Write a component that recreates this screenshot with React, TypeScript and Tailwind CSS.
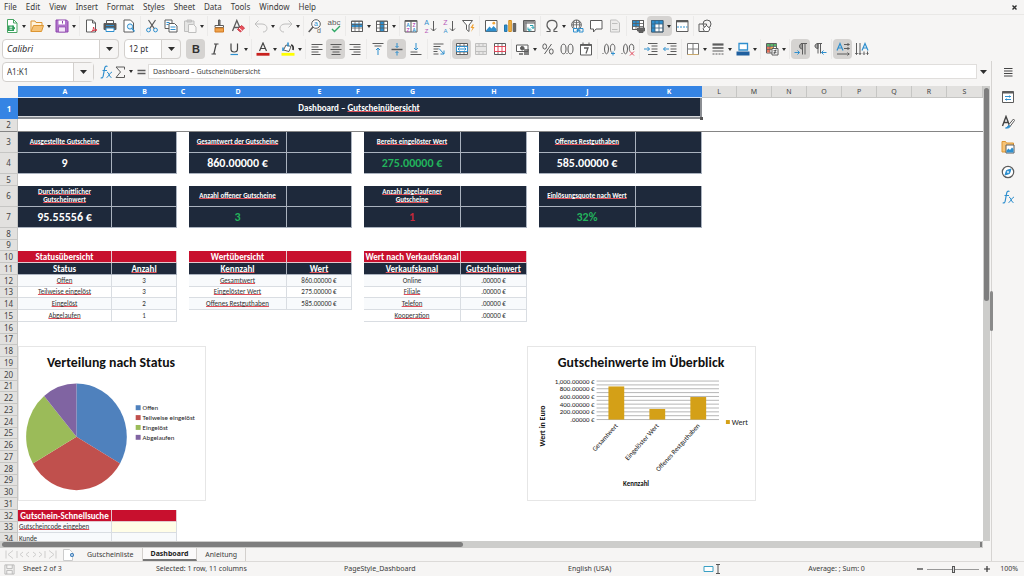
import { useState } from "react";
import type { ReactNode } from "react";

const INK = "#5c5c5c";
const BLUE = "#2f8fce";
const GLYPH_FONT = "Liberation Sans, sans-serif";

function Icon({ children, dim = false }: { children: ReactNode; dim?: boolean }) {
  return (
    <svg width="14" height="14" viewBox="0 0 14 14" fill="none" stroke={INK} strokeWidth="1" opacity={dim ? 0.35 : 1} aria-hidden="true">
      {children}
    </svg>
  );
}

function Glyph({ x, y, size, fill = INK, bold = false, children }: { x: number; y: number; size: number; fill?: string; bold?: boolean; children: string }) {
  return (
    <text x={x} y={y} fontSize={size} fill={fill} stroke="none" fontFamily={GLYPH_FONT} fontWeight={bold ? 700 : 400} textAnchor="middle">
      {children}
    </text>
  );
}

const grid = "M1.5 2.5h11v10h-11zM1.5 5.5h11M1.5 9h11M5 2.5v10M9 2.5v10";

const icons: Record<string, ReactNode> = {
  new: (
    <Icon>
      <path d="M2.5.5h6l3.500 3.500v9.500h-9.500z" fill="#fff" stroke="#4aa564" />
      <path d="M8.500.5v3.500h3.500" stroke="#4aa564" />
      <path d="M3 6.500h6v5.500h-6z" fill="#2f9e5b" stroke="none" />
      <path d="M4.500 8.200h3M4.500 10.200h3" stroke="#fff" />
      <path d="M7.500 7l2.500 2.200-2.500 2.200" fill="#2f9e5b" stroke="#2f9e5b" />
    </Icon>
  ),
  open: (
    <Icon>
      <path d="M1 12.500v-10.500h4l1 1.500h6v3" fill="#fff3dc" stroke="#dd9633" />
      <path d="M1 12.500l2.500-6h10l-2 6z" fill="#f6c377" stroke="#dd9633" />
    </Icon>
  ),
  save: (
    <Icon>
      <path d="M1 1h10.500l1.500 1.500v10.500h-12z" fill="#b074cb" stroke="#8e44ad" />
      <path d="M3.500 1.500h6.500v4h-6.500z" fill="#fff" stroke="none" />
      <path d="M3.500 8h7v5h-7z" fill="#f3e6f8" stroke="#8e44ad" strokeWidth=".7" />
      <path d="M7.500 2v2.500" stroke="#8e44ad" />
    </Icon>
  ),
  pdf: (
    <Icon>
      <path d="M2.500 1h6l3 3v9h-9z" fill="#fff" />
      <path d="M8.500 1v3h3" />
      <path d="M7.500 12.500c1.500-1 2-2.500 2-4.500.5 2.500 1.500 3 3.500 3-2 0-4 .5-5.500 1.500z" stroke="#dc3545" />
    </Icon>
  ),
  print: (
    <Icon>
      <path d="M3.500 4.500v-3h7v3" fill="#fff" />
      <path d="M1 4.500h12v6h-12z" fill="#585858" />
      <path d="M3 9h8v3.500h-8z" fill="#fff" stroke={BLUE} />
      <path d="M3 6.500h8" stroke={BLUE} />
    </Icon>
  ),
  preview: (
    <Icon>
      <path d="M2 1h6.500l3 3v9h-9.500z" fill="#fff" />
      <circle cx="8" cy="7.500" r="2.600" stroke={BLUE} fill="#e7f4fc" />
      <path d="M10 9.500l2.500 3" stroke={BLUE} strokeWidth="1.300" />
    </Icon>
  ),
  cut: (
    <Icon>
      <path d="M3.500 1l5.800 8.600M10.500 1l-5.800 8.600" strokeWidth="1.200" />
      <circle cx="3.500" cy="11" r="1.900" stroke={BLUE} />
      <circle cx="10.500" cy="11" r="1.900" stroke={BLUE} />
    </Icon>
  ),
  copy: (
    <Icon>
      <path d="M1 1h7v8.500h-7z" fill="#fff" />
      <path d="M2.500 3.500h3M2.500 5.500h2" stroke={BLUE} />
      <path d="M5 4.500h5.500l2.500 2.500v6h-8z" fill="#fff" />
      <path d="M6.500 8h5M6.500 10.500h5" stroke={BLUE} />
    </Icon>
  ),
  paste: (
    <Icon dim>
      <path d="M1.500 2h9.500v10.500h-9.500z" fill="#c8c8c8" />
      <path d="M4 1h4.500v2h-4.500z" fill="#888" />
      <path d="M5.500 5.500h5l2.500 2.500v5.500h-7.500z" fill="#fff" />
    </Icon>
  ),
  clone: (
    <Icon>
      <path d="M6.500 1h1.500v5h-1.500z" fill="#8a8a8a" />
      <path d="M3 6.500h8.500v2h-8.500z" fill="#fff" />
      <path d="M3 9h8.500v4h-8.500z" fill="#f0a24a" stroke="#d17b22" />
    </Icon>
  ),
  clear: (
    <Icon>
      <path d="M1.500 12l4.300-10.500 3 7M3 8.500h5" strokeWidth="1.300" />
      <path d="M6.500 10.500l4-4 3 2.500-4 4z" fill="#e8505b" stroke="#cc3944" />
      <path d="M8 9l3 2.700" stroke="#fff" />
    </Icon>
  ),
  undo: (
    <Icon dim>
      <path d="M4.500 1.500l-3.500 3.500 3.500 3.500M1 5h7c3 0 5 2 5 4.200s-1.500 3.800-4 3.800" />
    </Icon>
  ),
  redo: (
    <Icon dim>
      <path d="M9.500 1.500l3.500 3.500-3.500 3.500M13 5h-7c-3 0-5 2-5 4.200s1.500 3.800 4 3.800" />
    </Icon>
  ),
  find: (
    <Icon>
      <circle cx="8" cy="5" r="4.300" fill="#fff" />
      <path d="M5 8l-4.300 5" strokeWidth="1.500" />
      <Glyph x={8} y={7} size={7} fill={BLUE}>a</Glyph>
      <Glyph x={11} y={13.500} size={7}>d</Glyph>
    </Icon>
  ),
  spell: (
    <Icon>
      <Glyph x={7} y={6} size={8}>abc</Glyph>
      <path d="M5 10l2.500 2.500 5.500-5.500" stroke="#2fa866" strokeWidth="1.400" />
    </Icon>
  ),
  row: (
    <Icon>
      <path d="M1.500 2h11v10.500h-11z" fill="#fff" />
      <path d="M1 4.500h12v3.500h-12z" fill={BLUE} stroke="none" />
      <path d={grid} strokeWidth=".8" />
    </Icon>
  ),
  column: (
    <Icon>
      <path d="M1.500 2h11v10.500h-11z" fill="#fff" />
      <path d="M5 2h4v10.500h-4z" fill={BLUE} stroke="none" />
      <path d={grid} strokeWidth=".8" />
    </Icon>
  ),
  sort: (
    <Icon>
      <path d="M1 1.500h12v11.500h-12zM7 1.500v11.500" fill="#fff" />
      <path d="M1 2h12" strokeWidth="1.700" />
      <Glyph x={4} y={7.500} size={5} fill={BLUE} bold>A</Glyph>
      <Glyph x={4} y={12.500} size={5} fill="#b558b8" bold>Z</Glyph>
      <Glyph x={10} y={7.500} size={5} fill="#b558b8" bold>Z</Glyph>
      <Glyph x={10} y={12.500} size={5} fill={BLUE} bold>A</Glyph>
    </Icon>
  ),
  asc: (
    <Icon>
      <Glyph x={3.500} y={6} size={7} fill={BLUE}>A</Glyph>
      <Glyph x={3.500} y={13.500} size={6} fill="#b558b8">Z</Glyph>
      <path d="M10.500 2v10M8 9.500l2.500 2.500 2.500-2.500" />
    </Icon>
  ),
  desc: (
    <Icon>
      <Glyph x={3.500} y={6} size={7} fill="#b558b8">Z</Glyph>
      <Glyph x={3.500} y={13.500} size={6} fill={BLUE}>A</Glyph>
      <path d="M10.500 2v10M8 9.500l2.500 2.500 2.500-2.500" />
    </Icon>
  ),
  filter: (
    <Icon>
      <path d="M1.500 1.500h10l-3.500 4.500v6.500l-2.500-2v-4.500z" fill="#fff" />
      <path d="M11.500 5.500l-2 3.500h2l-1.500 4 3.500-5h-2l1.500-2.500z" fill="#f0a030" stroke="none" />
    </Icon>
  ),
  image: (
    <Icon>
      <path d="M1.500 1.500h11.500v11h-11.500z" fill="#fff" />
      <path d="M2 11.500l3.500-4 2 2 2-2.500 3 3v2.500h-10.500z" fill={BLUE} stroke="none" />
      <circle cx="9.800" cy="4.200" r="1.400" fill="#f3a73b" stroke="none" />
    </Icon>
  ),
  chart: (
    <Icon>
      <path d="M1.500 6h2.500v6.500h-2.500z" fill={BLUE} stroke="#2576ab" />
      <path d="M5.800 1.500h2.500v11h-2.500z" fill="#f3b64b" stroke="#d48d1b" />
      <path d="M10.200 4.500h2.500v8h-2.500z" fill="#6a6a6a" />
    </Icon>
  ),
  pivot: (
    <Icon>
      <path d="M1.500 1.500h11.500v11h-11.500zM1.500 4h11.500M4 1.500v11" fill="#fff" />
      <path d="M2 2.700h10.500M2.700 3v9" strokeWidth="1.600" stroke="#8a8a8a" />
      <path d="M6 8.500v2.500h3.500M8 9.500l-1.500 1.500 1.500 1.300M8 6.500h3v3M9.500 8l1.500 1.500 1.300-1.500" stroke="#25a0ae" />
    </Icon>
  ),
  omega: (
    <Icon>
      <path d="M1.500 12.500h3.500v-1.800c-2-1-3-2.700-3-4.700 0-2.800 2-4.700 5-4.700s5 1.900 5 4.700c0 2-1 3.700-3 4.700v1.800h3.500" strokeWidth="1.200" />
    </Icon>
  ),
  link: (
    <Icon>
      <circle cx="6.500" cy="5.800" r="4.800" fill="#fff" />
      <path d="M1.700 5.800h9.600M6.500 1v9.600M3 2.800c2 1.300 5 1.300 7 0M4.500 1.500c-1.500 2.500-1.500 6 0 8.500M8.500 1.500c1.500 2.500 1.500 6 0 8.500" strokeWidth=".8" />
      <path d="M3.500 9.500h4v3.500h-4zM9 9.500h4v3.500h-4zM6.500 11.300h4" fill="#f6f5f4" stroke={BLUE} />
    </Icon>
  ),
  comment: (
    <Icon>
      <path d="M1.500 1.500h11.500v8.500h-6l-2.500 3v-3h-3z" fill="#fff" />
    </Icon>
  ),
  headfoot: (
    <Icon dim>
      <path d="M2.500 1h6l3 3v9h-9z" fill="#ddd" />
      <path d="M4 4.500h5.500M4 10.500h5.500" />
    </Icon>
  ),
  printarea: (
    <Icon>
      <path d="M1.500 1.500h11v9h-11z" fill="#fff" />
      <path d="M1.500 1.500h7v6h-7z" fill={BLUE} stroke="none" />
      <path d="M1.500 1.500h11v9h-11zM1.500 4.500h11M1.500 7.500h11M5 1.500v9M8.500 1.500v9" strokeWidth=".8" />
      <path d="M6.500 9h7v3h-7zM8 11.500h4v2h-4z" fill="#666" />
    </Icon>
  ),
  freeze: (
    <Icon>
      <path d="M1.500 1.500h11.500v11.500h-11.500z" fill="#fff" />
      <path d="M1.500 1.500h11.500v3.500h-8v8h-3.500z" fill={BLUE} stroke="none" />
      <path d="M1.500 1.500h11.500v11.500h-11.500zM1.500 5h11.500M1.500 9h11.500M5 1.500v11.500M9 1.500v11.500" strokeWidth=".8" stroke="#37607d" />
    </Icon>
  ),
  split: (
    <Icon>
      <path d="M1.500 1.500h11.500v11h-11.500z" fill="#fff" />
      <path d="M1.500 2.300h11.500" strokeWidth="2" />
      <path d="M2 8h10.500" stroke={BLUE} strokeDasharray="2 1" />
    </Icon>
  ),
  shapes: (
    <Icon>
      <path d="M1 5h7.500v7.500h-7.500z" />
      <circle cx="9" cy="5" r="4" />
      <path d="M5 9.500l3.500-3 3.500 3-1.500 3h-4z" fill="#fff" />
    </Icon>
  ),
  bold: <Icon><Glyph x={7} y={11} size={11} fill="#303030" bold>B</Glyph></Icon>,
  italic: (
    <Icon>
      <path d="M6 2h4.500M3.500 12h4.500M8.200 2l-2.400 10" strokeWidth="1.200" stroke="#444" />
    </Icon>
  ),
  underline: (
    <Icon>
      <path d="M4 1.500v5.500c0 4 6.500 4 6.500 0v-5.500" stroke="#444" strokeWidth="1.200" />
      <path d="M3.500 12.500h7.500" stroke={BLUE} strokeWidth="1.200" />
    </Icon>
  ),
  fontcolor: (
    <Icon>
      <path d="M3.500 9l3.500-8 3.500 8M4.700 6.500h4.600" strokeWidth="1.200" stroke="#444" />
      <path d="M.5 12.300h13" stroke="#c9211e" strokeWidth="2.800" />
    </Icon>
  ),
  highlight: (
    <Icon>
      <path d="M5 3l5 1.500-2 5-5.500-1.500z" fill="#fff" />
      <path d="M2 5.500v3.500M7 .5v4" stroke={BLUE} strokeWidth="1.600" />
      <path d="M10 3c2 0 2.500 2.500 2 5" stroke="#333" strokeWidth="1.700" />
      <path d="M.5 12.300h13" stroke="#ffff00" strokeWidth="2.800" />
    </Icon>
  ),
  left: <Icon><path d="M1.500 2.500h11M1.500 5h7M1.500 7.500h11M1.500 10h7M1.500 12.500h9" /></Icon>,
  center: <Icon><path d="M1.500 2.500h11M3.500 5h7M1.500 7.500h11M3.500 10h7M2.500 12.500h9" /></Icon>,
  right: <Icon><path d="M1.500 2.500h11M5.500 5h7M1.500 7.500h11M5.500 10h7M3.500 12.500h9" /></Icon>,
  top: (
    <Icon>
      <path d="M1.500 1.500h11M3.500 4h7" />
      <path d="M7 13v-7M5 8l2-2 2 2" stroke={BLUE} />
    </Icon>
  ),
  middle: (
    <Icon>
      <path d="M1.500 7.500h11" strokeWidth="1.400" />
      <path d="M7 1v4.500M5.500 4l1.500 1.500 1.500-1.500M7 13.500v-4M5.500 11l1.500-1.500 1.500 1.500" stroke={BLUE} />
    </Icon>
  ),
  bottom: (
    <Icon>
      <path d="M1.500 12.500h11M1.500 10h7" />
      <path d="M7 1v7M5 6l2 2 2-2" stroke={BLUE} />
    </Icon>
  ),
  wrap: (
    <Icon>
      <path d="M1.500 2h10M1.500 4.500h7M1.500 7h5M1.500 9.500h4M1.500 12h5" />
      <path d="M7 6.500l5 5.500M12 8.500v3.500h-3.500" stroke={BLUE} />
    </Icon>
  ),
  merge: (
    <Icon>
      <path d="M1.500 1.500h11v11h-11z" fill="#fff" />
      <path d="M1.500 4h11M1.500 10h11M5 1.500v2.500M9 1.500v2.500M5 10v2.500M9 10v2.500" strokeWidth=".8" />
      <path d="M1.500 4.500h11v5h-11zM3 7h8M4.500 5.500l-1.500 1.500 1.500 1.500M9.500 5.500l1.500 1.500-1.500 1.500" stroke={BLUE} />
    </Icon>
  ),
  mergecells: (
    <Icon dim>
      <path d="M1.500 1.500h11v11h-11z" fill="#ccc" />
      <path d="M1.500 4.500h11M1.500 9.500h11M5 1.500v3M9 1.500v3M5 9.500v3M9 9.500v3" />
    </Icon>
  ),
  unmerge: (
    <Icon>
      <path d="M1.500 1.500h11v11h-11z" fill="#fff" />
      <path d="M1.500 4.500h11M5 1.500v3M9 1.500v3M5 9.500v3M9 9.500v3" strokeWidth=".8" />
      <path d="M1.500 4.500h11v5h-11zM5 4.500v5M9 4.500v5" stroke="#e0475a" />
    </Icon>
  ),
  currency: (
    <Icon>
      <path d="M.5 3h11.500v6.500h-11.500z" fill="#fff" />
      <circle cx="6.300" cy="6.200" r="1.800" fill={INK} />
      <path d="M8 8h5M8 10h5M8 12h5M3 12h4" strokeWidth="1.400" />
    </Icon>
  ),
  percent: (
    <Icon>
      <ellipse cx="3.700" cy="4.500" rx="1.900" ry="2.600" />
      <ellipse cx="10.300" cy="9.500" rx="1.900" ry="2.600" />
      <path d="M10.500 2l-7 10" />
    </Icon>
  ),
  number: (
    <Icon>
      <ellipse cx="3.500" cy="7" rx="2.500" ry="4.800" />
      <ellipse cx="10.500" cy="7" rx="2.500" ry="4.800" />
      <path d="M6.500 11.500h1" />
    </Icon>
  ),
  date: (
    <Icon>
      <path d="M1.500 2.500h11v10.500h-11z" fill="#fff" />
      <path d="M1.500 3h11" strokeWidth="1.800" />
      <path d="M4 .5v2M10 .5v2" />
      <path d="M5 6h4l-2 5.500" strokeWidth="1.300" />
    </Icon>
  ),
  adddec: (
    <Icon>
      <path d="M.5 11.500h1" />
      <ellipse cx="4.500" cy="7" rx="2" ry="4.800" />
      <path d="M9.500 10.500c-1.600-2-1.600-8.300 1-8.300s2.600 4 2 6.300" />
      <path d="M11 9.500v4M9 11.500h4" stroke={BLUE} />
    </Icon>
  ),
  deldec: (
    <Icon>
      <path d="M.5 11.500h1" />
      <ellipse cx="4.500" cy="7" rx="2" ry="4.800" />
      <path d="M9 9.500c-1.200-2.300-1-7.300 1.500-7.300s2.600 4 2 5.800" />
      <path d="M9 9.500l4 4M13 9.500l-4 4" stroke="#e0475a" />
    </Icon>
  ),
  indent: (
    <Icon>
      <path d="M4 1.500h9.500M7.500 4h6M7.500 7h6M7.500 9.500h6M4 12.500h9.500" />
      <path d="M0 7h5.500M3.500 5l2 2-2 2" stroke={BLUE} />
    </Icon>
  ),
  outdent: (
    <Icon>
      <path d="M4 1.500h9.500M7.500 4h6M7.500 7h6M7.500 9.500h6M4 12.500h9.500" />
      <path d="M6 7h-5.500M2.500 5l-2 2 2 2" stroke={BLUE} />
    </Icon>
  ),
  borders: (
    <Icon>
      <path d="M1.500 1.500h11v11h-11zM7 1.500v11M1.500 7h11" fill="#fff" stroke="#777" />
      <path d="M1.500 12.500h11" stroke="#c9a86b" />
    </Icon>
  ),
  linestyle: (
    <Icon>
      <path d="M1.500 2.500h11" strokeWidth="2.200" />
      <path d="M1.500 6h11" strokeWidth="1.600" />
      <path d="M1.500 9h11" />
      <path d="M1.500 12h11" strokeDasharray="2 1" />
    </Icon>
  ),
  bordercolor: (
    <Icon>
      <path d="M3 1.500h8.500v6.500h-8.500z" fill="#fff" stroke={BLUE} strokeWidth="1.300" />
      <path d="M.5 11.500h13" stroke="#1f5f9f" strokeWidth="4" />
    </Icon>
  ),
  conditional: (
    <Icon>
      <path d="M1.500 1.500h10v9.500h-10z" fill="#fff" />
      <path d="M2 2h9.500v2.500h-9.500z" fill="#58b46b" stroke="none" />
      <path d="M2 5h3v5.500h-3z" fill="#e8735c" stroke="none" />
      <path d="M5 5h3.500v2.500h-3.500z" fill="#f0a24a" stroke="none" />
      <path d="M1.500 4.500h10M1.500 7.500h10M5 1.500v9.500M8.500 1.500v9.500" strokeWidth=".7" />
      <path d="M7 6.500h6v6.500h-6zM8.500 8.700h3M8.500 10.700h3M9 12l2-4.500" fill="#fff" />
    </Icon>
  ),
  ltr: (
    <Icon>
      <path d="M8.500 12.500v-11M11 12.500v-11M13 1.500h-6" />
      <path d="M8.500 1.500c-4 0-4 5.500 0 5.500z" fill={INK} fillOpacity=".5" />
      <path d="M.5 10.500h5M3.500 8.500l2 2-2 2" stroke={BLUE} />
    </Icon>
  ),
  rtl: (
    <Icon>
      <path d="M5 11.500v-10M7.500 11.500v-10M9 1.500h-5" />
      <path d="M5 1.500c-4 0-4 5 0 5z" fill={INK} fillOpacity=".5" />
      <path d="M13.500 10.500h-5M10.500 8.500l-2 2 2 2" stroke={BLUE} />
    </Icon>
  ),
  horiz: (
    <Icon>
      <path d="M1 8.500l3-7 3 7M2 6h4" stroke={BLUE} strokeWidth="1.200" />
      <path d="M8 2.500h5.500M8 6.500h5.500M1 12h12.500M11.500 1l1.500 1.500-1.500 1.500M11.500 5l1.500 1.500-1.500 1.500M11.500 10.500l1.500 1.500-1.500 1.500" />
    </Icon>
  ),
  vert: (
    <Icon>
      <path d="M7 8.500l3-7 3 7M8 6h4" stroke={BLUE} strokeWidth="1.200" />
      <path d="M1.500 1v11.500M5 1v11.500M.3 11l1.200 1.500 1.200-1.500M3.800 11l1.200 1.500 1.200-1.500M9 9.500v3M12.500 9.500v3M8 11.500l1 1 1-1M11.500 11.500l1 1 1-1" />
    </Icon>
  ),
  burger: <Icon><path d="M3 3.500h8.500M3 6h8.500M3 8.500h8.500M3 11h8.500" stroke="#444" strokeWidth="1.200" /></Icon>,
  props: (
    <Icon>
      <path d="M1.500 1.500h11v11h-11z" fill="#fff" />
      <path d="M1.500 2.500h11" strokeWidth="2" />
      <path d="M4 6.500h6M4 9.500h6M8.500 5.500v2M5.500 8.500v2" stroke={BLUE} />
    </Icon>
  ),
  styles: (
    <Icon>
      <path d="M1.500 11l3.500-9.500 3.500 9M2.700 7.500h5" strokeWidth="1.400" stroke="#444" />
      <path d="M12.500 4l-5 6 1.500 1.500 4.500-6z" fill="#fff" />
      <path d="M4.500 13c2.500 0 1.500-2.500 3.500-2.500 2 1 .5 3-3.500 2.500z" fill={BLUE} stroke={BLUE} />
    </Icon>
  ),
  gallery: (
    <Icon>
      <path d="M1 12v-10.500h3.500l1 1.500h7v9z" fill="#f6c377" stroke="#dd9633" />
      <path d="M5 5h8v8h-8z" fill="#fff" />
      <path d="M5.500 12.500v-2l2-2 1.500 1.500 2-2.500 1.500 1.500v3.500z" fill={BLUE} stroke="none" />
    </Icon>
  ),
  navigator: (
    <Icon>
      <circle cx="7" cy="7" r="5.700" fill="#fff" strokeWidth="1.200" />
      <path d="M10 4l-1.500 4.500-4.500 1.500 1.500-4.500z" fill={BLUE} stroke={BLUE} />
      <circle cx="7" cy="7" r=".9" fill="#fff" stroke="none" />
    </Icon>
  ),
  fx: (
    <Icon>
      <path d="M8.500 1.500c-2-1-2.700.5-3 2.500l-1.300 7c-.3 1.800-1.200 2.300-2.500 1.700M3.500 5.500h4.500" stroke={BLUE} strokeWidth="1.200" />
      <path d="M8 7c2 0 2 5.500 4.500 5.500M13 7c-2 0-3.500 5.500-5.500 5.500" stroke={BLUE} />
    </Icon>
  ),
  sum: <Icon><path d="M11.500 4.500v-2.500h-8.500l4.500 5-4.500 5.500h8.500v-2.500" /></Icon>,
  equals: <Icon><path d="M3.500 5.500h8M3.500 8.500h8" strokeWidth="1.400" /></Icon>,
};

function Caret({ big = false }: { big?: boolean }) {
  return (
    <svg width={big ? 7 : 4} height={big ? 4 : 3} viewBox="0 0 8 5" preserveAspectRatio="none" fill="#2e2e2e" aria-hidden="true">
      <path d="M0 0h8l-4 5z" />
    </svg>
  );
}

type Tool = { id: string; label: string; menu?: boolean; active?: boolean } | "|";

const standardTools: Tool[] = [
  { id: "new", label: "New", menu: true }, { id: "open", label: "Open", menu: true }, { id: "save", label: "Save", menu: true }, "|",
  { id: "pdf", label: "Export as PDF" }, { id: "print", label: "Print" }, { id: "preview", label: "Print Preview" }, "|",
  { id: "cut", label: "Cut" }, { id: "copy", label: "Copy" }, { id: "paste", label: "Paste", menu: true }, "|",
  { id: "clone", label: "Clone Formatting" }, { id: "clear", label: "Clear Formatting" }, "|",
  { id: "undo", label: "Undo", menu: true }, { id: "redo", label: "Redo", menu: true }, "|",
  { id: "find", label: "Find and Replace" }, { id: "spell", label: "Spelling" }, "|",
  { id: "row", label: "Row", menu: true }, { id: "column", label: "Column", menu: true }, "|",
  { id: "sort", label: "Sort" }, { id: "asc", label: "Sort Ascending" }, { id: "desc", label: "Sort Descending" }, { id: "filter", label: "AutoFilter" }, "|",
  { id: "image", label: "Insert Image" }, { id: "chart", label: "Insert Chart" }, { id: "pivot", label: "Insert Pivot Table" }, "|",
  { id: "omega", label: "Special Character", menu: true }, { id: "link", label: "Hyperlink" }, { id: "comment", label: "Comment" }, { id: "headfoot", label: "Headers and Footers" }, "|",
  { id: "printarea", label: "Define Print Area" }, { id: "freeze", label: "Freeze Rows and Columns", menu: true, active: true }, { id: "split", label: "Split Window" }, "|",
  { id: "shapes", label: "Draw Functions" },
];

const formatTools: Tool[] = [
  { id: "bold", label: "Bold", active: true }, { id: "italic", label: "Italic" }, { id: "underline", label: "Underline", menu: true }, "|",
  { id: "fontcolor", label: "Font Color", menu: true }, { id: "highlight", label: "Background Color", menu: true }, "|",
  { id: "left", label: "Align Left" }, { id: "center", label: "Center", active: true }, { id: "right", label: "Align Right" }, "|",
  { id: "top", label: "Align Top" }, { id: "middle", label: "Center Vertically", active: true }, { id: "bottom", label: "Align Bottom" }, "|",
  { id: "wrap", label: "Wrap Text" }, "|",
  { id: "merge", label: "Merge and Center", active: true }, { id: "mergecells", label: "Merge Cells" }, { id: "unmerge", label: "Unmerge Cells" }, "|",
  { id: "currency", label: "Currency", menu: true }, { id: "percent", label: "Percent" }, { id: "number", label: "Number" }, { id: "date", label: "Date" }, "|",
  { id: "adddec", label: "Add Decimal Place" }, { id: "deldec", label: "Delete Decimal Place" }, "|",
  { id: "indent", label: "Increase Indent" }, { id: "outdent", label: "Decrease Indent" }, "|",
  { id: "borders", label: "Borders", menu: true }, { id: "linestyle", label: "Border Style", menu: true }, { id: "bordercolor", label: "Border Color", menu: true }, "|",
  { id: "conditional", label: "Conditional Formatting", menu: true }, "|",
  { id: "ltr", label: "Left-To-Right", active: true }, { id: "rtl", label: "Right-To-Left" }, "|",
  { id: "horiz", label: "Text direction horizontal", active: true }, { id: "vert", label: "Text direction vertical" },
];

function Toolbar({ tools }: { tools: Tool[] }) {
  return (
    <>
      {tools.map((t, i) =>
        t === "|" ? (
          <span key={i} className="flex h-5 w-1 shrink-0 justify-center"><span className="w-px bg-[#ebeae9]" /></span>
        ) : (
          <span key={i} className={`flex h-5 shrink-0 rounded-sm ${t.active ? "bg-[#d5d3d1]" : ""}`}>
            <button aria-label={t.label} aria-pressed={t.active} className="flex w-[19px] items-center justify-center">{icons[t.id]}</button>
            {t.menu && <button aria-label={`${t.label} options`} className="flex w-[6px] items-center justify-center"><Caret /></button>}
          </span>
        )
      )}
    </>
  );
}

type Cell = { t?: ReactNode; k: string; v?: string };

const kinds: Record<string, string> = {
  kpi: "bg-[#1e293b] text-white font-bold text-[7px] leading-[8px] border-r border-b border-[#aab2be]",
  num: "bg-[#1e293b] font-bold text-xs leading-4 border-r border-b border-[#aab2be]",
  red: "bg-[#c8102e] text-white font-bold text-[9px] leading-[11px] border-r border-b border-[#e3c9cf]",
  head: "bg-[#1e293b] text-white font-bold text-[9px] leading-[10px] border-r border-b border-[#aab2be]",
  odd: "bg-[#f8fafc] text-[#333] text-[7px] leading-[10px] border-r border-b border-[#d9dde2]",
  even: "bg-white text-[#333] text-[7px] leading-[10px] border-r border-b border-[#d9dde2]",
  label: "bg-[#f8fafc] text-[#333] text-[7px] leading-[10px] text-left indent-px border-r border-b border-[#d9dde2]",
  input: "bg-[#fffde7] border-r border-b border-[#d9dde2]",
};

function Sp({ children }: { children: ReactNode }) {
  return <span className="underline decoration-[#e04f59] decoration-1 underline-offset-0 [text-decoration-skip-ink:none]">{children}</span>;
}

const blank = { k: "" };
const sp = (s: string) => <Sp>{s}</Sp>;
const kpiRow = (texts: ReactNode[]): Cell[] => texts.flatMap((t) => [{ t, k: "kpi" }, { k: "kpi" }, blank]).slice(0, 11);
const numRow = (vals: [string, string][]): Cell[] => vals.flatMap(([t, c]) => [{ t, k: "num", v: c }, { k: "num" }, blank]).slice(0, 11);

const GREEN = "text-[#22b45c]";
const bodyRow = (k: string, parts: (ReactNode[] | null)[]): Cell[] =>
  parts.flatMap((p) => (p ? [{ t: p[0], k }, { t: p[1], k }, blank] : [blank, blank, blank]));

const rows: Record<number, Cell[]> = {
  3: kpiRow([sp("Ausgestellte Gutscheine"), sp("Gesamtwert der Gutscheine"), sp("Bereits eingelöster Wert"), sp("Offenes Restguthaben")]),
  4: numRow([["9", "text-white"], ["860.00000 €", "text-white"], ["275.00000 €", GREEN], ["585.00000 €", "text-white"]]),
  6: kpiRow([
    <>{sp("Durchschnittlicher")}<br />{sp("Gutscheinwert")}</>,
    sp("Anzahl offener Gutscheine"),
    <>{sp("Anzahl abgelaufener")}<br />{sp("Gutscheine")}</>,
    sp("Einlösungsquote nach Wert"),
  ]),
  7: numRow([["95.55556 €", "text-white"], ["3", GREEN], ["1", "text-[#c5283a]"], ["32%", GREEN]]),
  10: bodyRow("red", [["Statusübersicht", ""], ["Wertübersicht", ""], ["Wert nach Verkaufskanal", ""]]),
  11: bodyRow("head", [["Status", sp("Anzahl")], [sp("Kennzahl"), sp("Wert")], [sp("Verkaufskanal"), sp("Gutscheinwert")]]),
  12: bodyRow("odd", [[sp("Offen"), "3"], [sp("Gesamtwert"), "860.00000 €"], ["Online", ".00000 €"]]),
  13: bodyRow("even", [[sp("Teilweise eingelöst"), "3"], [sp("Eingelöster Wert"), "275.00000 €"], [sp("Filiale"), ".00000 €"]]),
  14: bodyRow("odd", [[sp("Eingelöst"), "2"], [sp("Offenes Restguthaben"), "585.00000 €"], [sp("Telefon"), ".00000 €"]]),
  15: bodyRow("even", [[sp("Abgelaufen"), "1"], null, [sp("Kooperation"), ".00000 €"]]),
  32: [{ t: "Gutschein-Schnellsuche", k: "red" }, { k: "red" }],
  33: [{ t: sp("Gutscheincode eingeben"), k: "label" }, { k: "input" }],
  34: [{ t: "Kunde", k: "label" }, { k: "label" }],
};

function rowHeight(n: number) {
  if (n === 3 || n === 4 || n === 6 || n === 7) return "h-[21px]";
  if (n === 9 || (n > 9 && n % 4 === 1)) return "h-[11px]";
  return "h-3";
}

const letters = "ABCDEFGHIJKLMNOPQRS".split("");

function SheetTable() {
  return (
    <table className="w-full table-fixed border-separate border-spacing-0 text-center font-[Carlito,Lato,sans-serif] whitespace-nowrap [&_td]:overflow-hidden [&_td]:p-0 [&_th]:p-0">
      <colgroup>
        <col className="w-[18px]" />
        <col className="w-[94px]" /><col className="w-[65px]" /><col className="w-3" />
        <col className="w-[98px]" /><col className="w-[65px]" /><col className="w-3" />
        <col className="w-[97px]" /><col className="w-[66px]" /><col className="w-3" />
        <col className="w-[97px]" /><col className="w-[66px]" />
        <col className="w-[35px]" /><col className="w-[35px]" /><col className="w-[35px]" /><col className="w-[35px]" />
        <col className="w-[35px]" /><col className="w-[35px]" /><col className="w-[35px]" /><col />
      </colgroup>
      <thead className="font-[Noto_Sans,sans-serif] text-[7px] leading-[10px]">
        <tr>
          <td className="h-3 bg-[#f6f5f4]" />
          {letters.map((l, i) => (
            <th key={l} scope="col" className={i < 11 ? "border-b border-[#d5e3f5] bg-[#3584e4] font-bold text-white" : "border-r border-b border-[#c6c6c4] bg-[#e2e1df] font-normal text-[#444]"}>{l}</th>
          ))}
        </tr>
      </thead>
      <tbody>
        <tr>
          <th scope="row" className="h-[21px] bg-[#3584e4] font-[Noto_Sans,sans-serif] text-[8px] leading-[10px] font-bold text-white">1</th>
          <td colSpan={11} className="border-r-2 border-b-2 border-[#8b8e93] bg-[#1e293b] text-[9px] leading-4 font-bold text-white shadow-[inset_0_-1px_0_#d8dadd]">
            Dashboard – <Sp>Gutscheinübersicht</Sp>
          </td>
          <td colSpan={8} />
        </tr>
        <tr>
          <th scope="row" className="h-[13px] border-r border-b border-r-[#c6c6c4] border-b-[#858585] bg-[#e2e1df] font-[Noto_Sans,sans-serif] text-[8px] leading-[10px] font-normal text-[#444]">2</th>
          <td colSpan={19} className="border-b border-[#858585]" />
        </tr>
        {Array.from({ length: 32 }, (_, i) => i + 3).map((n) => {
          const cells = rows[n] ?? [];
          return (
            <tr key={n}>
              <th scope="row" className={`${rowHeight(n)} border-r border-b border-[#c6c6c4] bg-[#e2e1df] font-[Noto_Sans,sans-serif] text-[8px] leading-[10px] font-normal text-[#444]`}>{n}</th>
              {cells.map((c, i) => (
                <td key={i} className={`${kinds[c.k] ?? ""} ${c.v ?? ""}`}>{c.t}</td>
              ))}
              <td colSpan={19 - cells.length} />
            </tr>
          );
        })}
      </tbody>
    </table>
  );
}

const slices = [
  { name: "Offen", n: 3, color: "#4f81bd" },
  { name: "Teilweise eingelöst", n: 3, color: "#c0504d" },
  { name: "Eingelöst", n: 2, color: "#9bbb59" },
  { name: "Abgelaufen", n: 1, color: "#8064a2" },
];

function PieChart() {
  let acc = 0;
  const pt = (a: number) => `${58 + 51 * Math.sin(a)} ${91 - 54 * Math.cos(a)}`;
  return (
    <svg width="188" height="155" viewBox="0 0 188 155" className="absolute top-[260px] left-[18px] border border-[#e6e6e6] bg-white font-[Carlito,Lato,sans-serif]" role="img" aria-label="Verteilung nach Status">
      <text x="93" y="20" fontSize="14" fontWeight="700" textAnchor="middle" fill="#111">Verteilung nach Status</text>
      {slices.map((s) => {
        const a0 = (acc / 9) * 2 * Math.PI;
        acc += s.n;
        const a1 = (acc / 9) * 2 * Math.PI;
        return <path key={s.name} d={`M58 91L${pt(a0)}A51 54 0 0 1 ${pt(a1)}Z`} fill={s.color} />;
      })}
      {slices.map((s, i) => (
        <g key={s.name}>
          <rect x="118" y={59 + i * 10} width="5" height="5" fill={s.color} />
          <text x="125" y={64 + i * 10} fontSize="7" fill="#222">{s.name}</text>
        </g>
      ))}
    </svg>
  );
}

const bars = [
  { name: "Gesamtwert", v: 860 },
  { name: "Eingelöster Wert", v: 275 },
  { name: "Offenes Restguthaben", v: 585 },
];

function BarChart() {
  return (
    <svg width="229" height="155" viewBox="0 0 229 155" className="absolute top-[260px] left-[527px] border border-[#e6e6e6] bg-white font-[Carlito,Lato,sans-serif]" role="img" aria-label="Gutscheinwerte im Überblick">
      <text x="114" y="20" fontSize="14" fontWeight="700" textAnchor="middle" fill="#111">Gutscheinwerte im Überblick</text>
      {Array.from({ length: 11 }, (_, i) => (
        <path key={i} d={`M69 ${73.500 - i * 3.900}h124`} stroke="#b5b5b5" strokeWidth="1" />
      ))}
      {["1,000.00000 €", "800.00000 €", "600.00000 €", "400.00000 €", "200.00000 €", ".00000 €"].map((t, i) => (
        <text key={t} x="67" y={37 + i * 7.800} fontSize="7" textAnchor="end" fill="#222">{t}</text>
      ))}
      {bars.map((b, i) => (
        <g key={b.name}>
          <rect x={81 + i * 41.500} y={73.500 - b.v * 0.039} width="16" height={b.v * 0.039} fill="#d4a017" />
          <text transform={`translate(${91 + i * 41.500} 80) rotate(-48)`} fontSize="7" textAnchor="end" fill="#222">{b.name}</text>
        </g>
      ))}
      <text transform="translate(17 80) rotate(-90)" fontSize="8" fontWeight="700" textAnchor="middle" fill="#111">Wert in Euro</text>
      <text x="109" y="141" fontSize="7" fontWeight="700" textAnchor="middle" fill="#111">Kennzahl</text>
      <rect x="200" y="74" width="4" height="4" fill="#d4a017" />
      <text x="206" y="79" fontSize="8" fill="#222">Wert</text>
    </svg>
  );
}

function Combo({ label, value, className, textClass }: { label: string; value: string; className: string; textClass: string }) {
  return (
    <div className={`relative h-5 shrink-0 ${className}`}>
      <select aria-label={label} defaultValue={value} className={`h-full w-full appearance-none rounded-sm border border-[#d3d0cd] bg-white pl-1 text-[#2e2e2e] ${textClass}`}>
        <option>{value}</option>
      </select>
      <span className="pointer-events-none absolute inset-y-0 right-0 flex w-5 items-center justify-center rounded-r-sm border border-[#d3d0cd] bg-[#f6f5f4]"><Caret big /></span>
    </div>
  );
}

const menus = ["File", "Edit", "View", "Insert", "Format", "Styles", "Sheet", "Data", "Tools", "Window", "Help"];

export default function App() {
  const [tab, setTab] = useState("Dashboard");
  const [name, setName] = useState("A1:K1");
  const [formula, setFormula] = useState("Dashboard – Gutscheinübersicht");
  return (
    <div className="flex h-screen flex-col overflow-hidden bg-[#f6f5f4] font-[Noto_Sans,sans-serif] text-[8px] leading-3 text-[#3a3a3a]">
      <header className="flex h-[15px] shrink-0 items-center justify-between border-b border-[#e9e8e6] pr-[5px] pl-1">
        <nav aria-label="Menu" className="flex gap-[9px]">
          {menus.map((m) => <button key={m}>{m}</button>)}
        </nav>
        <button aria-label="Close document" className="p-0.5">
          <svg width="5" height="5" viewBox="0 0 5 5" stroke="#2e2e2e" strokeWidth="1.400" aria-hidden="true"><path d="M.5.5l4 4M4.500.5l-4 4" /></svg>
        </button>
      </header>
      <div role="toolbar" aria-label="Standard" className="flex h-[22px] shrink-0 items-center pl-0.5"><Toolbar tools={standardTools} /></div>
      <div role="toolbar" aria-label="Formatting" className="flex h-6 shrink-0 items-center pl-0.5">
        <Combo label="Font name" value="Calibri" className="mr-[5px] w-[117px]" textClass="text-[9px] italic" />
        <Combo label="Font size" value="12 pt" className="mr-[5px] w-[57px]" textClass="text-[8px]" />
        <Toolbar tools={formatTools} />
      </div>

      <div className="flex min-h-0 flex-1">
        <main className="flex min-w-0 flex-1 flex-col">
          <div className="flex h-[25px] shrink-0 items-center pr-0.5 pb-1 pl-0.5">
            <div className="mr-[5px] flex h-5 w-[92px] rounded-sm border border-[#d3d0cd] bg-white">
              <input aria-label="Name box" value={name} onChange={(e) => setName(e.target.value)} className="min-w-0 flex-1 bg-transparent pl-1 text-[8px] outline-none" />
              <button aria-label="Name box list" className="flex w-5 items-center justify-center border-l border-[#d3d0cd] bg-[#f6f5f4]"><Caret big /></button>
            </div>
            <button aria-label="Function Wizard">{icons.fx}</button>
            <button aria-label="Select Function">{icons.sum}</button>
            <button aria-label="Function options" className="flex w-[7px] justify-center"><Caret /></button>
            <button aria-label="Formula">{icons.equals}</button>
            <input aria-label="Formula input" value={formula} onChange={(e) => setFormula(e.target.value)} className="h-[15px] min-w-0 flex-1 border border-[#e0dedc] bg-white pl-1 text-[7px] text-[#444] outline-none" />
            <button aria-label="Expand formula bar" className="flex w-3 items-center justify-center"><Caret big /></button>
          </div>
          <div className="flex min-h-0 flex-1">
            <div className="relative min-w-0 flex-1 overflow-hidden bg-white">
              <SheetTable />
              <span className="absolute top-[31px] left-[700px] size-[3px] bg-[#555]" />
              <PieChart />
              <BarChart />
            </div>
            <div className="mr-px w-[7px] shrink-0 bg-[#cdcdcb] px-px pt-0.5"><div className="h-[47%] rounded-full bg-[#7e7e7e]" /></div>
          </div>
          <div className="mr-2 flex h-[7px] shrink-0 items-center justify-between bg-[#cdcdcb] pr-px pl-0.5"><div className="h-[5px] w-[47%] rounded-full bg-[#7e7e7e]" /><div className="h-[5px] w-0.5 bg-[#7e7e7e]" /></div>
          <div className="flex h-[13px] shrink-0 items-stretch">
            <div className="flex w-[63px] items-center pl-[5px] opacity-30">
              <svg width="52" height="9" viewBox="0 0 52 9" fill="none" stroke="#777" aria-hidden="true">
                <path d="M1 .5v8M8 .5l-5 4 5 4M18 2l-3 2.500 3 2.500M24 2l-3 2.500 3 2.500M28 2l3 2.500-3 2.500M34 2l3 2.500-3 2.500M44 .5l5 4-5 4M51 .5v8M12 1v7M40 1v7" />
              </svg>
            </div>
            <button aria-label="Add sheet" className="flex w-3 items-center">
              <svg width="12" height="12" viewBox="0 0 12 12" fill="none" aria-hidden="true">
                <path d="M.5.5h6l3 3v8h-9z" fill="#fff" stroke="#ccc" />
                <circle cx="9" cy="6" r="2" fill="#2f74b5" />
                <path d="M9 5v2M8 6h2" stroke="#fff" strokeWidth=".7" />
              </svg>
            </button>
            <div role="tablist" aria-label="Sheets" className="flex pl-1 text-[7px]">
              {["Gutscheinliste", "Dashboard", "Anleitung"].map((t) => (
                <button key={t} role="tab" aria-selected={tab === t} onClick={() => setTab(t)} className={`border-r border-[#d3d0cd] px-2 ${tab === t ? "border-b-2 border-b-[#777] bg-[#fbfafa] leading-[10px] font-bold text-[#222]" : ""}`}>{t}</button>
              ))}
            </div>
          </div>
        </main>
        <div className="flex w-px shrink-0 items-center justify-center bg-[#d6d4d2]"><div className="z-10 h-10 w-[3px] shrink-0 rounded-full bg-[#8a8a8a]" /></div>
        <aside aria-label="Sidebar" className="flex w-8 shrink-0 flex-col items-center gap-[11px] pt-1">
          {["burger", "props", "styles", "gallery", "navigator", "fx"].map((id) => (
            <button key={id} aria-label={id}>{icons[id]}</button>
          ))}
        </aside>
      </div>

      <footer className="flex h-[15px] shrink-0 items-center border-t border-[#dcdad8] pr-[6px] pl-1 text-[7px]">
        <button aria-label="Document modified" className="w-[19px] opacity-50">
          <svg width="11" height="11" viewBox="0 0 12 12" fill="none" stroke="#777" aria-hidden="true"><path d="M1 1h10v10h-10zM3 1v4h6v-4M3 11v-4h6v4" /></svg>
        </button>
        <span className="w-[133px]">Sheet 2 of 3</span>
        <span className="w-[188px]">Selected: 1 row, 11 columns</span>
        <span className="w-56">PageStyle_Dashboard</span>
        <span className="flex-1">English (USA)</span>
        <svg width="18" height="10" viewBox="0 0 18 10" fill="none" className="mr-[87px]" aria-hidden="true">
          <path d="M1 2.500h9v5h-9z" stroke="#3aa0c4" fill="#fff" />
          <path d="M13 .5h4M15 .5v9M13 9.500h4" stroke="#555" />
        </svg>
        <span className="w-[109px]">Average: ; Sum: 0</span>
        <button aria-label="Zoom out" className="w-2"><svg width="6" height="6" viewBox="0 0 6 6" stroke="#333" aria-hidden="true"><path d="M0 3h6" strokeWidth="1.200" /></svg></button>
        <input aria-label="Zoom" type="range" defaultValue="50" className="mx-0.5 h-2 w-[52px] appearance-none bg-transparent [&::-webkit-slider-runnable-track]:h-px [&::-webkit-slider-runnable-track]:bg-[#999] [&::-webkit-slider-thumb]:-mt-[3px] [&::-webkit-slider-thumb]:h-[7px] [&::-webkit-slider-thumb]:w-[3px] [&::-webkit-slider-thumb]:appearance-none [&::-webkit-slider-thumb]:border [&::-webkit-slider-thumb]:border-[#555] [&::-webkit-slider-thumb]:bg-[#ddd]" />
        <button aria-label="Zoom in" className="mr-2 ml-[3px] w-2"><svg width="6" height="6" viewBox="0 0 6 6" stroke="#333" aria-hidden="true"><path d="M0 3h6M3 0v6" strokeWidth="1.200" /></svg></button>
        <span>100%</span>
      </footer>
    </div>
  );
}
